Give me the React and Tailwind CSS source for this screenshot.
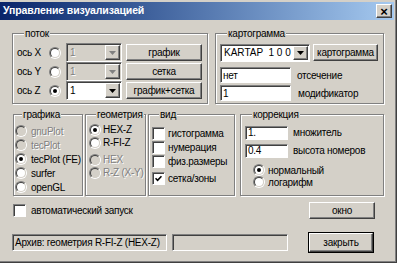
import React from "react";

const sunken = "border border-t-[#808080] border-l-[#808080] border-r-white border-b-white shadow-[inset_1px_1px_0_#404040] p-[1px]";
const raised = "border border-t-white border-l-white border-r-[#404040] border-b-[#404040] shadow-[inset_-1px_-1px_0_#808080]";
const grayText = "text-[#808080] [text-shadow:1px_1px_0_#fff]";

function Group(props) {
    return (
        <fieldset className={"min-w-0 border border-[#808080] shadow-[1px_1px_0_#fff,inset_1px_1px_0_#fff] " + props.className}>
            <legend className="ml-[7px] px-[1px] bg-[#d4d0c8] leading-[13px]">{props.label}</legend>
            {props.children}
        </fieldset>
    );
}

function Button(props) {
    return (
        <div className={raised + " bg-[#d4d0c8] flex items-center justify-center leading-none " + props.className}>
            {props.children}
        </div>
    );
}

function Combo(props) {
    const dis = props.disabled;
    return (
        <div className={sunken + " flex " + (dis ? "bg-[#d4d0c8] " : "bg-white ") + props.className}>
            <span className={"flex-1 min-w-0 pl-[2px] flex items-center overflow-hidden " + (dis ? grayText : "")}>{props.value}</span>
            <span className={raised + " w-[15px] shrink-0 bg-[#d4d0c8] flex items-center justify-center"}>
                <svg width="7" height="4" viewBox="0 0 7 4">
                    <path d="M0 0h7L3.5 4z" fill={dis ? "#808080" : "#000"} />
                </svg>
            </span>
        </div>
    );
}

function Field(props) {
    return (
        <div className={sunken + " flex items-center pl-[2px] overflow-hidden " + (props.gray ? "bg-[#d4d0c8] " : "bg-white ") + props.className}>
            {props.value}
        </div>
    );
}

function Radio(props) {
    return (
        <span className="w-[12px] h-[12px] shrink-0 rounded-full border border-t-[#808080] border-l-[#808080] border-r-white border-b-white flex">
            <span className={"flex-1 rounded-full border border-t-[#404040] border-l-[#404040] border-r-[#d4d0c8] border-b-[#d4d0c8] flex items-center justify-center " + (props.disabled ? "bg-[#d4d0c8]" : "bg-white")}>
                {props.checked && <span className="w-[4px] h-[4px] rounded-full bg-black"></span>}
            </span>
        </span>
    );
}

function Check(props) {
    return (
        <span className={sunken + " w-[13px] h-[13px] shrink-0 bg-white flex items-center justify-center"}>
            {props.checked && (
                <svg width="7" height="7" viewBox="0 0 7 7">
                    <path d="M0.5 3.2L2.6 5.3L6.5 1.2" stroke="#000" strokeWidth="1.6" fill="none" />
                </svg>
            )}
        </span>
    );
}

function RadioItem(props) {
    return (
        <div className={"flex items-center " + props.className}>
            <Radio checked={props.checked} disabled={props.disabled} />
            <span className={props.disabled ? grayText : ""}>{props.label}</span>
        </div>
    );
}

function AxisRow(props) {
    return (
        <div className="flex items-center h-[19px]">
            <span className="w-[32px]">{props.label}</span>
            <Radio checked={props.checked} />
            <Combo value="1" disabled={props.disabled} className="ml-[5px] w-[56px] h-[19px]" />
            <Button className="ml-[4px] w-[76px] h-[17px]">{props.button}</Button>
        </div>
    );
}

export default function App() {
    return (
        <div className="w-[397px] h-[263px] bg-[#d4d0c8] font-['Liberation_Sans',Arial,sans-serif] text-[10px] tracking-[-0.25px] text-black whitespace-nowrap flex flex-col pt-[2px] pr-[2px] border-r border-b border-r-[#404040] border-b-[#404040] shadow-[inset_-1px_-1px_0_#808080] overflow-hidden">
            <div className="h-[18px] shrink-0 flex items-center pl-[3px] pr-[2px] bg-gradient-to-r from-[#0a246a] to-[#a6caf0]">
                <span className="text-white font-bold text-[10.5px] tracking-[-0.1px]">Управление визуализацией</span>
                <Button className="ml-auto w-[16px] h-[14px] text-[13px] font-bold">×</Button>
            </div>

            <div className="flex flex-col pl-[12px] pr-[10px]">
                <div className="flex mt-[7px] gap-[7px]">
                    <Group label="поток" className="w-[196px] pl-[4px] pt-[3px] pb-[3px]">
                        <AxisRow label="ось X" button="график" disabled />
                        <AxisRow label="ось Y" button="сетка" disabled />
                        <AxisRow label="ось Z" button="график+сетка" checked />
                    </Group>
                    <Group label="картограмма" className="flex-1 pl-[4px] pt-[3px] pb-[2px]">
                        <div className="flex items-center h-[19px]">
                            <Combo value="KARTAP  1 0 0" className="w-[90px] h-[18px] whitespace-pre tracking-normal" />
                            <Button className="ml-[3px] w-[65px] h-[17px]">картограмма</Button>
                        </div>
                        <div className="flex items-center mt-[5px]">
                            <Field value="нет" className="w-[71px] h-[16px]" />
                            <span className="ml-[6px]">отсечение</span>
                        </div>
                        <div className="flex items-center mt-[2px]">
                            <Field value="1" className="w-[71px] h-[16px]" />
                            <span className="ml-[7px]">модификатор</span>
                        </div>
                    </Group>
                </div>

                <div className="flex mt-[4px]">
                    <Group label="графика" className="ml-[1px] w-[70px] h-[88px] pl-[1px] pt-[3px]">
                        <RadioItem label="gnuPlot" disabled className="h-[14px] gap-[4px]" />
                        <RadioItem label="tecPlot" disabled className="h-[14px] gap-[4px]" />
                        <RadioItem label="tecPlot (FE)" checked className="h-[14px] gap-[4px]" />
                        <RadioItem label="surfer" className="h-[14px] gap-[4px]" />
                        <RadioItem label="openGL" className="h-[14px] gap-[4px]" />
                    </Group>
                    <Group label="геометрия" className="ml-[2px] w-[61px] h-[88px] pl-[3px] pt-[2px]">
                        <RadioItem label="HEX-Z" checked className="h-[13px] gap-[2px]" />
                        <RadioItem label="R-FI-Z" className="h-[13px] gap-[2px]" />
                        <RadioItem label="HEX" disabled className="h-[13px] gap-[2px] mt-[4px]" />
                        <RadioItem label="R-Z (X-Y)" disabled className="h-[13px] gap-[2px]" />
                    </Group>
                    <Group label="вид" className="ml-[2px] w-[87px] h-[88px] pl-[3px] pt-[5px]">
                        <div className="flex items-center h-[14px] gap-[3px]"><Check /><span>гистограмма</span></div>
                        <div className="flex items-center h-[14px] gap-[3px]"><Check /><span>нумерация</span></div>
                        <div className="flex items-center h-[14px] gap-[3px]"><Check /><span>физ.размеры</span></div>
                        <div className="flex items-center h-[14px] gap-[3px] mt-[3px]"><Check checked /><span>сетка/зоны</span></div>
                    </Group>
                    <Group label="коррекция" className="ml-[5px] flex-1 h-[88px] pl-[4px] pt-[4px]">
                        <div className="flex items-center">
                            <Field value="1." className="w-[43px] h-[14px]" />
                            <span className="ml-[5px]">множитель</span>
                        </div>
                        <div className="flex items-center mt-[3px]">
                            <Field value="0.4" className="w-[43px] h-[14px]" />
                            <span className="ml-[5px]">высота номеров</span>
                        </div>
                        <RadioItem label="нормальный" checked className="h-[12px] gap-[3px] ml-[8px] mt-[6px]" />
                        <RadioItem label="логарифм" className="h-[12px] gap-[3px] ml-[8px]" />
                    </Group>
                </div>

                <div className="flex items-center h-[17px] mt-[6px]">
                    <span className="ml-[1px]"><Check /></span>
                    <span className="ml-[5px]">автоматический запуск</span>
                    <Button className="ml-auto mr-[9px] w-[66px] h-[17px]">окно</Button>
                </div>

                <div className="flex items-center h-[21px] mt-[13px]">
                    <Field value="Архив: геометрия R-FI-Z (HEX-Z)" gray className="w-[155px] h-[17px]" />
                    <Field value="" gray className="ml-[5px] w-[116px] h-[17px]" />
                    <div className="ml-auto mr-[10px] border border-black">
                        <Button className="w-[64px] h-[19px]">закрыть</Button>
                    </div>
                </div>
            </div>
        </div>
    );
}
